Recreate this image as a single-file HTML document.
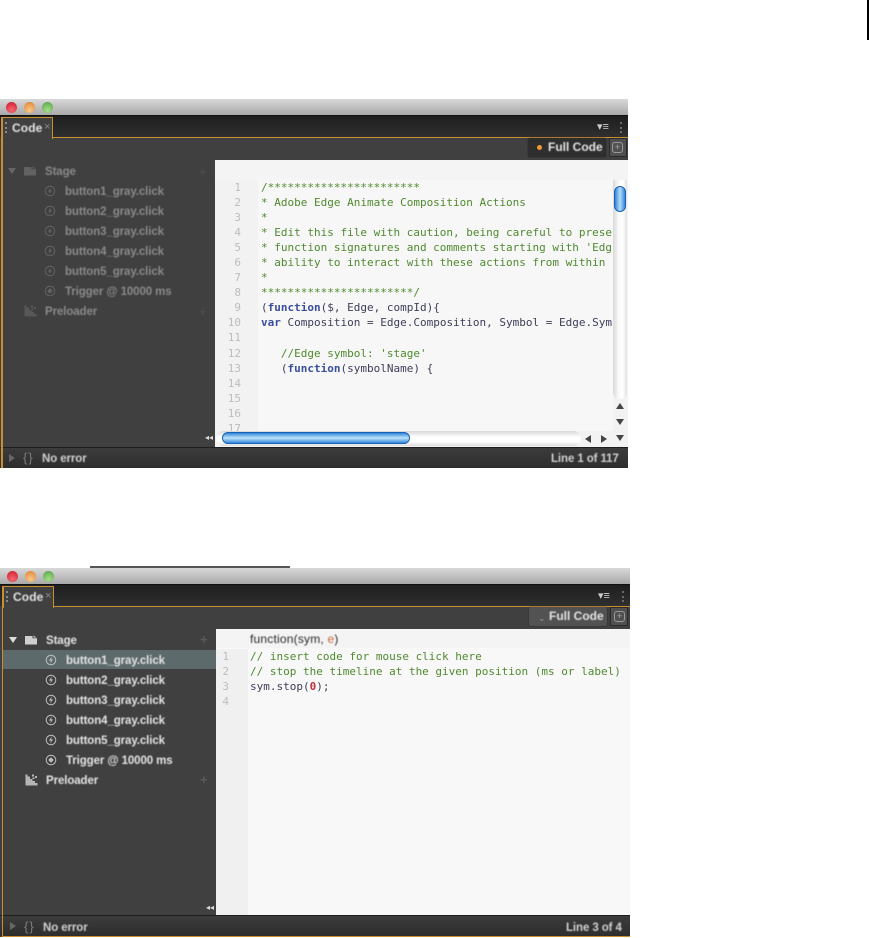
<!DOCTYPE html>
<html><head><meta charset="utf-8">
<style>
html,body{margin:0;padding:0;background:#fff;}
body{width:869px;height:938px;position:relative;overflow:hidden;font-family:"Liberation Sans",sans-serif;}
div,span,svg.a{position:absolute;white-space:pre;}
.win{left:0;width:630px;overflow:hidden;white-space:normal;}
.wrap{left:0;top:0;white-space:normal;}
span.s{position:static;}
.title{left:0;top:0;width:100%;height:16px;background:linear-gradient(#d8d8d8,#a9a9a9);}
.dot{width:11px;height:11px;border-radius:50%;top:3px;}
.r{background:radial-gradient(circle at 50% 75%,#f06a72,#dd3344 65%,#b8242e);}
.o{background:radial-gradient(circle at 50% 75%,#f6c98a,#e89a50 65%,#c47a34);}
.g{background:radial-gradient(circle at 50% 75%,#a8dc8c,#6fb85c 65%,#4f9444);}
.tabbar{left:0;top:16px;width:100%;height:22px;background:linear-gradient(#1e1e1e,#2f2f2f);border-top:1px solid #111;box-sizing:border-box;}
.orange{background:#c98f2e;}
.panel{left:0;top:38px;width:100%;background:#404040;}
.t{font-size:11.5px;font-weight:bold;color:#e4e4e4;filter:blur(.4px);letter-spacing:-.1px;line-height:14px;}
.dim{color:#8a8a8a;}
.code{font-family:"DejaVu Sans Mono",monospace;font-size:11px;line-height:15.05px;filter:blur(.35px);}
.num{font-family:"DejaVu Sans Mono",monospace;font-size:11px;line-height:15.05px;color:#bdbdbd;filter:blur(.35px);text-align:right;}
.c{color:#4f8a2e;}
.k{color:#3a4f9c;font-weight:bold;}
.p{color:#3d3d5a;}
.status{left:0;background:linear-gradient(#3c3c3c,#2d2d2d);border-top:1px solid #1d1d1d;box-sizing:border-box;}
.plus{color:#5a5a5a;font-size:13px;line-height:16px;font-weight:bold;}
.brace{font-size:13px;line-height:14px;letter-spacing:1px;color:#7c7c7c;}
</style></head>
<body>
<svg width="0" height="0" style="position:absolute">
  <symbol id="bolt" viewBox="0 0 12 12"><circle cx="6" cy="6" r="4.8" fill="none" stroke="currentColor"/><path d="M7 2.2 3.8 6.6H6L5 9.8 8.2 5.4H6Z" fill="currentColor"/></symbol>
  <symbol id="trig" viewBox="0 0 12 12"><circle cx="6" cy="6" r="4.8" fill="none" stroke="currentColor"/><path d="M6 3.2 8.8 6 6 8.8 3.2 6Z" fill="currentColor"/></symbol>
  <symbol id="stage" viewBox="0 0 12 10"><path d="M0 1H7.5V3.2H12V9.5H0Z" fill="currentColor"/><path d="M8.5 .5 11.5 2.5H8.5Z" fill="currentColor"/></symbol>
  <symbol id="pre" viewBox="0 0 13 12"><path d="M.5 .5V11.5H12.5V9H10V7H7.5V5H5V2.5H2.5V.5Z" fill="currentColor"/><path d="M7 .5h2v2H7ZM10 2h2v2h-2ZM7.5 3.5h2v1.5h-2Z" fill="currentColor"/></symbol>
</svg>
<div style="left:867px;top:0;width:2px;height:40px;background:#000"></div>

<!-- Window 1 -->
<div class="win" style="top:99px;height:369px;width:628px">
  <div class="title"></div>
  <div class="dot r" style="left:6px"></div><div class="dot o" style="left:24px"></div><div class="dot g" style="left:42px"></div>
  <div class="tabbar"></div>
  <div class="panel" style="height:331px"></div>
  <div class="orange" style="left:52px;top:38px;width:576px;height:1px"></div>
  <div style="left:2px;top:18px;width:49px;height:21px;background:#404040;border:1px solid #c98f2e;border-bottom:0"></div>
  <div class="orange" style="left:1px;top:18px;width:2px;height:351px"></div>
  <div style="left:5px;top:23px;width:2px;height:11px;border-left:2px dotted #8a8a8a"></div>
  <div class="t" style="left:12px;top:22px;font-size:12px;letter-spacing:.1px">Code</div>
  <div style="left:44px;top:21px;font-size:11px;color:#888;line-height:14px">×</div>
  <div style="left:597px;top:22px;width:15px;height:12px;color:#ccc;font-size:11px;line-height:12px">▾≡</div>
  <div style="left:620px;top:23px;width:2px;height:11px;border-left:2px dotted #6a6a6a"></div>
  <div style="left:528px;top:39px;width:78px;height:19px;background:#2e2e2e;border-radius:2px;box-shadow:0 0 1px #111"></div>
  <div style="left:537px;top:46px;width:5px;height:5px;border-radius:50%;background:#f09a30"></div>
  <div class="t" style="left:548px;top:41px;font-size:12px;letter-spacing:0">Full Code</div>
  <div style="left:609px;top:39px;width:18px;height:19px;background:#505050;border:1px solid #2a2a2a;box-sizing:border-box"></div>
  <div style="left:612px;top:43px;width:9px;height:9px;border:1px solid #999;border-radius:3px;color:#aaa;font-size:9px;line-height:9px;text-align:center">+</div>
  <!-- tree -->
  <div class="wrap" style="color:#626262">
    <div style="left:8px;top:69px;width:0;height:0;border:4px solid transparent;border-top:6px solid #666;border-bottom:0"></div>
    <svg class="a" style="left:24px;top:67px" width="12" height="10"><use href="#stage"/></svg>
    <div class="t dim" style="left:45px;top:66px">Stage</div>
    <svg class="a" style="left:44px;top:86px" width="12" height="12"><use href="#bolt"/></svg><div class="t dim" style="left:65px;top:86px">button1_gray.click</div>
    <svg class="a" style="left:44px;top:106px" width="12" height="12"><use href="#bolt"/></svg><div class="t dim" style="left:65px;top:106px">button2_gray.click</div>
    <svg class="a" style="left:44px;top:126px" width="12" height="12"><use href="#bolt"/></svg><div class="t dim" style="left:65px;top:126px">button3_gray.click</div>
    <svg class="a" style="left:44px;top:146px" width="12" height="12"><use href="#bolt"/></svg><div class="t dim" style="left:65px;top:146px">button4_gray.click</div>
    <svg class="a" style="left:44px;top:166px" width="12" height="12"><use href="#bolt"/></svg><div class="t dim" style="left:65px;top:166px">button5_gray.click</div>
    <svg class="a" style="left:44px;top:186px" width="12" height="12"><use href="#trig"/></svg><div class="t dim" style="left:65px;top:186px">Trigger @ 10000 ms</div>
    <svg class="a" style="left:24px;top:206px;color:#585858" width="13" height="12"><use href="#pre"/></svg>
    <div class="t dim" style="left:45px;top:206px">Preloader</div>
    <div class="plus" style="left:199px;top:65px;color:#4a4a4a">+</div>
    <div class="plus" style="left:199px;top:205px;color:#4a4a4a">+</div>
  </div>
  <!-- code area -->
  <div style="left:215px;top:61px;width:398px;height:287px;background:#f7f7f7"></div>
  <div style="left:215px;top:81px;width:43px;height:251px;background:#f2f2f2"></div>
  <div style="left:215px;top:61px;width:413px;height:20px;background:#f4f4f4"></div>
  <div class="num" style="left:215px;top:81px;width:26px;height:251px;overflow:hidden">1
2
3
4
5
6
7
8
9
10
11
12
13
14
15
16
17</div>
  <div class="code" style="left:261px;top:81px;width:352px;height:240px;overflow:hidden"><span class="c s">/***********************
* Adobe Edge Animate Composition Actions
*
* Edit this file with caution, being careful to prese
* function signatures and comments starting with 'Edg
* ability to interact with these actions from within
*
***********************/
</span><span class="p s">(</span><span class="k s">function</span><span class="p s">($, Edge, compId){
</span><span class="k s">var</span><span class="p s"> Composition = Edge.Composition, Symbol = Edge.Sym

</span><span class="c s">   //Edge symbol: 'stage'
</span><span class="p s">   (</span><span class="k s">function</span><span class="p s">(symbolName) {</span></div>
  <!-- v scrollbar -->
  <div style="left:613px;top:81px;width:15px;height:267px;background:#f2f2f2"></div>
  <div style="left:613px;top:81px;width:14px;height:219px;border-radius:0 0 7px 7px;background:linear-gradient(90deg,#d8d8d8,#fafafa 40%,#fff 70%,#e2e2e2)"></div>
  <div style="left:614px;top:87px;width:10px;height:24px;border:1.5px solid #1a62b4;border-radius:6px;background:linear-gradient(90deg,#2f86dc,#b5dcf8 50%,#2f86dc)"></div>
  <div style="left:616px;top:304px;width:0;height:0;border:4px solid transparent;border-bottom:6px solid #444;border-top:0"></div>
  <div style="left:616px;top:320px;width:0;height:0;border:4px solid transparent;border-top:6px solid #444;border-bottom:0"></div>
  <div style="left:616px;top:336px;width:0;height:0;border:4px solid transparent;border-top:6px solid #444;border-bottom:0"></div>
  <!-- h scrollbar -->
  <div style="left:215px;top:332px;width:398px;height:16px;background:#f2f2f2"></div>
  <div style="left:216px;top:332px;width:365px;height:15px;border-radius:8px;background:linear-gradient(#d8d8d8,#fff 40%,#fff 70%,#ddd)"></div>
  <div style="left:222px;top:333px;width:186px;height:10px;border:1.5px solid #1a62b4;border-radius:7px;background:linear-gradient(#2f86dc,#bfe4fa 50%,#2f86dc)"></div>
  <div style="left:585px;top:336px;width:0;height:0;border:4px solid transparent;border-right:6px solid #444;border-left:0"></div>
  <div style="left:601px;top:336px;width:0;height:0;border:4px solid transparent;border-left:6px solid #444;border-right:0"></div>
  <div style="left:205px;top:334px;color:#ddd;font-size:8px;line-height:10px">◂◂</div>
  <!-- status -->
  <div class="status" style="top:348px;width:100%;height:21px"></div>
  <div class="orange" style="left:1px;top:348px;width:2px;height:21px"></div>
  <div style="left:9px;top:355px;width:0;height:0;border:4px solid transparent;border-left:6px solid #666;border-right:0"></div>
  <div class="brace" style="left:23px;top:352px">{}</div>
  <div class="t" style="left:42px;top:353px;color:#d0d0d0">No error</div>
  <div class="t" style="left:551px;top:353px;color:#d0d0d0">Line 1 of 117</div>
</div>

<!-- Window 2 -->
<div style="left:90px;top:566px;width:200px;height:2px;background:#555"></div>
<div class="win" style="top:568px;height:370px">
  <div class="title"></div>
  <div class="dot r" style="left:7px"></div><div class="dot o" style="left:25px"></div><div class="dot g" style="left:43px"></div>
  <div class="tabbar"></div>
  <div class="panel" style="height:331px"></div>
  <div class="orange" style="left:53px;top:38px;width:577px;height:1px"></div>
  <div style="left:3px;top:18px;width:49px;height:21px;background:#404040;border:1px solid #c98f2e;border-bottom:0"></div>
  <div class="orange" style="left:2px;top:18px;width:1px;height:351px"></div>
  <div class="orange" style="left:2px;top:368px;width:628px;height:1px"></div>
  <div style="left:6px;top:23px;width:2px;height:11px;border-left:2px dotted #8a8a8a"></div>
  <div class="t" style="left:13px;top:22px;font-size:12px;letter-spacing:.1px">Code</div>
  <div style="left:45px;top:21px;font-size:11px;color:#888;line-height:14px">×</div>
  <div style="left:598px;top:22px;width:15px;height:12px;color:#ccc;font-size:11px;line-height:12px">▾≡</div>
  <div style="left:622px;top:23px;width:2px;height:11px;border-left:2px dotted #6a6a6a"></div>
  <div style="left:529px;top:39px;width:78px;height:19px;background:#525252;border-radius:2px;box-shadow:0 0 1px #111"></div>
  <div style="left:538px;top:45px;color:#999;font-size:9px;line-height:10px">⌄</div>
  <div class="t" style="left:549px;top:41px;font-size:12px;letter-spacing:0">Full Code</div>
  <div style="left:610px;top:39px;width:18px;height:19px;background:#505050;border:1px solid #2a2a2a;box-sizing:border-box"></div>
  <div style="left:614px;top:43px;width:9px;height:9px;border:1px solid #999;border-radius:3px;color:#aaa;font-size:9px;line-height:9px;text-align:center">+</div>
  <!-- tree -->
  <div style="left:3px;top:82px;width:213px;height:19px;background:#5d6a6b"></div>
  <div style="left:9px;top:69px;width:0;height:0;border:4px solid transparent;border-top:6px solid #ddd;border-bottom:0"></div>
  <svg class="a" style="left:25px;top:67px;color:#cfcfcf" width="12" height="10"><use href="#stage"/></svg>
  <div class="t" style="left:46px;top:66px">Stage</div>
  <div class="plus" style="left:200px;top:64px">+</div>
  <div class="plus" style="left:200px;top:204px">+</div>
  <div class="wrap" style="color:#bcbcbc">
    <svg class="a" style="left:45px;top:86px" width="12" height="12"><use href="#bolt"/></svg><div class="t" style="left:66px;top:86px">button1_gray.click</div>
    <svg class="a" style="left:45px;top:106px" width="12" height="12"><use href="#bolt"/></svg><div class="t" style="left:66px;top:106px">button2_gray.click</div>
    <svg class="a" style="left:45px;top:126px" width="12" height="12"><use href="#bolt"/></svg><div class="t" style="left:66px;top:126px">button3_gray.click</div>
    <svg class="a" style="left:45px;top:146px" width="12" height="12"><use href="#bolt"/></svg><div class="t" style="left:66px;top:146px">button4_gray.click</div>
    <svg class="a" style="left:45px;top:166px" width="12" height="12"><use href="#bolt"/></svg><div class="t" style="left:66px;top:166px">button5_gray.click</div>
    <svg class="a" style="left:45px;top:186px" width="12" height="12"><use href="#trig"/></svg><div class="t" style="left:66px;top:186px">Trigger @ 10000 ms</div>
  </div>
  <svg class="a" style="left:25px;top:206px;color:#b5b5b5" width="13" height="12"><use href="#pre"/></svg>
  <div class="t" style="left:46px;top:206px">Preloader</div>
  <div style="left:206px;top:335px;color:#ddd;font-size:8px;line-height:10px">◂◂</div>
  <!-- code -->
  <div style="left:216px;top:61px;width:414px;height:286px;background:#f8f8f8"></div>
  <div style="left:216px;top:81px;width:32px;height:266px;background:#f0f0f0"></div>
  <div style="left:216px;top:61px;width:414px;height:19px;background:#f4f4f4"></div>
  <div class="t" style="left:250px;top:64px;color:#2a2a2a;font-weight:normal;font-size:12px;letter-spacing:.2px">function(sym, <span class="s" style="color:#c8673a">e</span>)</div>
  <div class="num" style="left:216px;top:81px;width:13px">1
2
3
4</div>
  <div class="code" style="left:250px;top:81px"><span class="c s">// insert code for mouse click here
// stop the timeline at the given position (ms or label)
</span><span class="p s">sym.stop(</span><span class="s" style="color:#c0303a;font-weight:bold">0</span><span class="p s">);</span></div>
  <!-- status -->
  <div class="status" style="top:347px;width:100%;height:21px"></div>
  <div class="orange" style="left:2px;top:347px;width:1px;height:21px"></div>
  <div style="left:10px;top:354px;width:0;height:0;border:4px solid transparent;border-left:6px solid #666;border-right:0"></div>
  <div class="brace" style="left:24px;top:352px">{}</div>
  <div class="t" style="left:43px;top:353px;color:#d0d0d0">No error</div>
  <div class="t" style="left:566px;top:353px;color:#d0d0d0">Line 3 of 4</div>
</div>
</body></html>
